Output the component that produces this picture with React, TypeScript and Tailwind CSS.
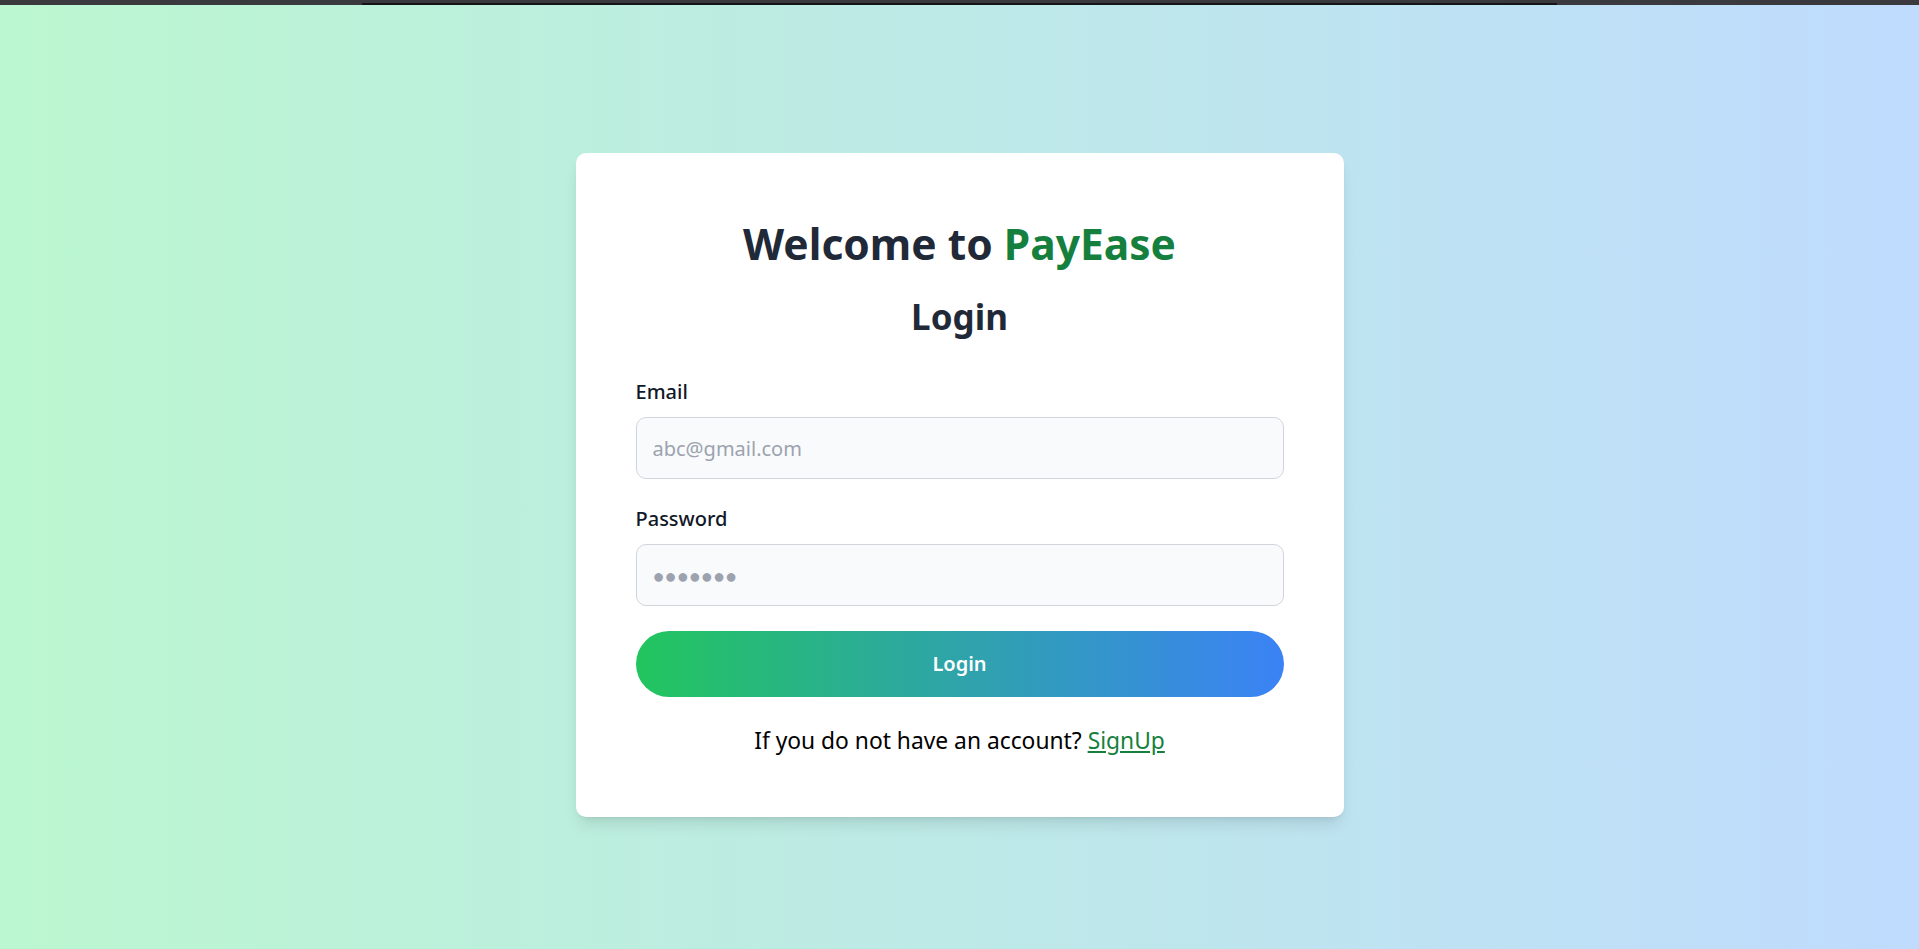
import React from "react";

const Login = () => {
  return (
    <div className="min-h-screen w-full bg-[linear-gradient(to_right,#bbf7d0,#bfdbfe)] font-['Noto_Sans',sans-serif]">
      <div className="h-[5px] bg-[#3a393e] flex items-end">
        <div className="ml-[362px] w-[1195px] h-[2px] bg-[#141417]" />
      </div>

      <div className="flex justify-center pt-[148px] pb-[132px]">
        <div className="w-[768px] bg-white rounded-[10px] shadow-lg px-[60px] pt-[65px] pb-[61px]">
          <h1 className="text-center text-[42.5px] leading-[52px] font-bold text-[#1f2937]">
            Welcome to <span className="text-[#15803d]">PayEase</span>
          </h1>
          <h2 className="mt-[25px] text-center text-[35px] leading-[44px] font-bold text-[#1f2937]">
            Login
          </h2>

          <form className="mt-[39px]" onSubmit={(e) => e.preventDefault()}>
            <label className="block text-[20px] leading-[28px] font-medium text-[#111827]">Email</label>
            <input
              type="email"
              placeholder="abc@gmail.com"
              className="mt-[11px] block w-full h-[62px] px-4 rounded-[10px] border border-[#d1d5db] bg-[#f9fafb] text-[20px] text-[#111827] placeholder:text-[#9ca3af] outline-none"
            />

            <label className="mt-[26px] block text-[20px] leading-[28px] font-medium text-[#111827]">Password</label>
            <input
              type="password"
              placeholder="●●●●●●●"
              className="mt-[11px] block w-full h-[62px] px-4 rounded-[10px] border border-[#d1d5db] bg-[#f9fafb] text-[20px] text-[#111827] placeholder:text-[#9ca3af] outline-none"
            />

            <button
              type="submit"
              className="mt-[25px] w-full h-[66px] rounded-full bg-[linear-gradient(to_right,#22c55e,#3b82f6)] text-white text-[20px] font-semibold"
            >
              Login
            </button>
          </form>

          <p className="mt-[29px] text-center text-[22.8px] leading-[30px] text-black">
            If you do not have an account?{" "}
            <a href="#" className="text-[#15803d] underline">SignUp</a>
          </p>
        </div>
      </div>
    </div>
  );
};

export default Login;
